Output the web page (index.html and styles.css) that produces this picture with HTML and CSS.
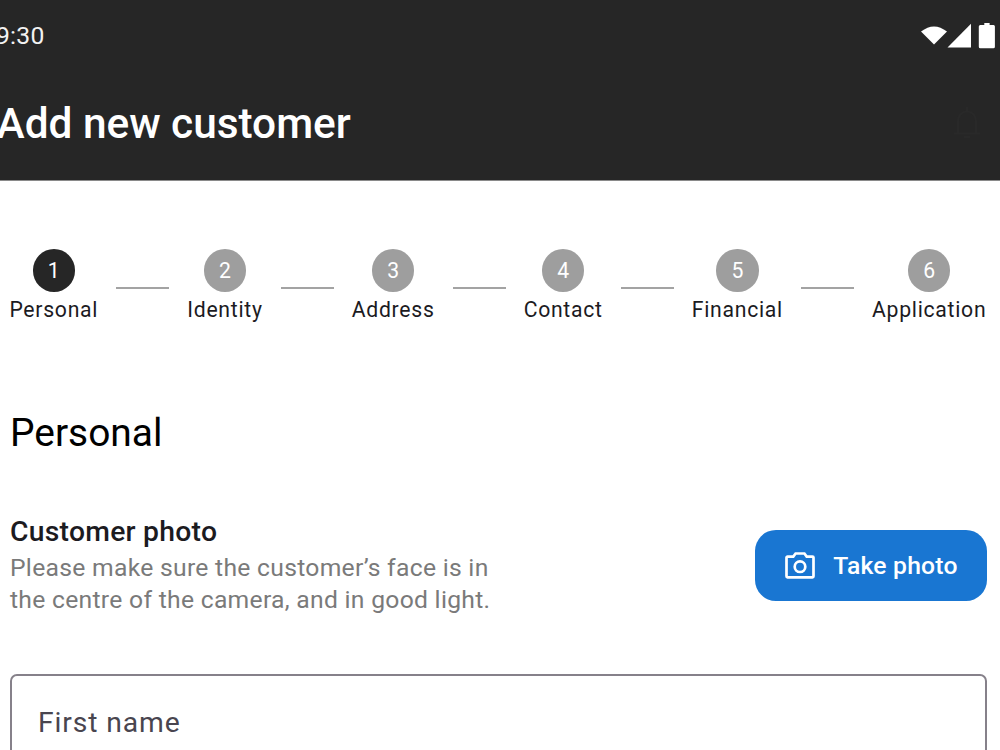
FILE: index.html
```
<!DOCTYPE html>
<html lang="en">
<head>
<meta charset="utf-8">
<title>Add new customer</title>
<link rel="stylesheet" href="styles.css">
</head>

<body>
<header class="appbar">
  <div class="statusbar">
    <span class="time">9:30</span>
    <svg class="status-icons" width="74" height="26" viewBox="0 0 74 26">
      <path d="M0 8.6 Q13 -1.8 26 8.6 L13 21.6z"/>
      <path d="M26.5 24.5 L50 0.8 V24.5z"/>
      <path d="M59.3 2 h4 v-2 h5.3 v2 h4 a1.5 1.5 0 0 1 1.3 1.5 V23.7 a1.5 1.5 0 0 1 -1.5 1.5 H59.3 a1.5 1.5 0 0 1 -1.5 -1.5 V3.5 a1.5 1.5 0 0 1 1.5 -1.5z"/>
    </svg>
  </div>
  <div class="titlebar">
    <h1>Add new customer</h1>
    <svg class="bell" width="28" height="36" viewBox="0 0 28 36">
      <path d="M1 29.5 H27 M5 29 V17 a9 9.5 0 0 1 18 0 V29 M14 7 V3 M11 33 h6"/>
    </svg>
  </div>
</header>

<main>
  <div class="steps">
    <div class="step active"><span class="num">1</span><span class="name">Personal</span></div>
    <div class="line"></div>
    <div class="step"><span class="num">2</span><span class="name">Identity</span></div>
    <div class="line"></div>
    <div class="step"><span class="num">3</span><span class="name">Address</span></div>
    <div class="line"></div>
    <div class="step"><span class="num">4</span><span class="name">Contact</span></div>
    <div class="line"></div>
    <div class="step"><span class="num">5</span><span class="name">Financial</span></div>
    <div class="line"></div>
    <div class="step"><span class="num">6</span><span class="name">Application</span></div>
  </div>

  <h2>Personal</h2>

  <div class="photo">
    <div class="photo-text">
      <h3>Customer photo</h3>
      <p>Please make sure the customer’s face is in<br>the centre of the camera, and in good light.</p>
    </div>
    <button class="take-photo">
      <svg width="30" height="27" viewBox="0 0 30 27">
        <path d="M2.5 4.6 H8.3 L10.6 1.5 H19.4 L21.7 4.6 H27.5 a1 1 0 0 1 1 1 V24.3 a1 1 0 0 1 -1 1 H2.5 a1 1 0 0 1 -1 -1 V5.6 a1 1 0 0 1 1 -1z"/>
        <circle cx="15" cy="14.7" r="5.3"/>
      </svg>
      Take photo
    </button>
  </div>

  <div class="field">First name</div>
</main>
</body>
</html>
```
FILE: styles.css
```
* {
  box-sizing: border-box;
}

body {
  margin: 0;
  height: 750px;
  overflow: hidden;
  background: #fff;
  font-family: Roboto, sans-serif;
  color: #1c1b1f;
}

h1, h2, h3, p {
  margin: 0;
}

.appbar {
  height: 181px;
  background: #262626;
  border-bottom: 1px solid #8a8a8a;
  color: #fff;
}

.statusbar {
  display: flex;
  justify-content: space-between;
  align-items: center;
  height: 71px;
  padding-right: 5px;
}

.time {
  margin-left: -4px;
  font-size: 24.7px;
  letter-spacing: .25px;
  color: #f2f2f2;
}

.status-icons {
  fill: #fff;
  overflow: visible;
}

.titlebar {
  display: flex;
  justify-content: space-between;
  align-items: center;
  height: 105px;
  padding-right: 19px;
}

.titlebar h1 {
  margin-left: -3.4px;
  font-size: 42.4px;
  font-weight: 500;
  letter-spacing: -.03px;
}

.bell {
  margin-bottom: 3px;
  fill: none;
  stroke: #292929;
  stroke-width: 2px;
}

main {
  padding: 68.2px 13px 0 10px;
}

.steps {
  display: flex;
  justify-content: space-between;
  margin: 0 .6px 0 -.6px;
}

.step {
  display: flex;
  flex-direction: column;
  align-items: center;
  gap: 4.4px;
  font-size: 21.2px;
}

.num {
  width: 42.4px;
  height: 42.4px;
  border-radius: 50%;
  background: #9e9e9e;
  color: #fff;
  line-height: 44px;
  text-align: center;
}

.active .num {
  background: #262626;
}

.name {
  line-height: 28.3px;
  letter-spacing: .72px;
}

.line {
  width: 53px;
  height: 2px;
  margin-top: 38px;
  background: #a3a3a3;
}

h2 {
  margin-top: 83.9px;
  font-size: 38.9px;
  line-height: 49.4px;
  font-weight: 400;
  color: #000;
}

.photo {
  display: flex;
  justify-content: space-between;
  align-items: flex-start;
  margin-top: 53px;
}

.photo h3 {
  font-size: 28.3px;
  line-height: 42.4px;
  font-weight: 500;
  letter-spacing: .26px;
}

.photo p {
  margin: -.8px 0 .8px;
  font-size: 24.7px;
  line-height: 31.9px;
  letter-spacing: .28px;
  color: #7a7a7a;
}

.take-photo {
  display: flex;
  align-items: center;
  justify-content: center;
  gap: 18px;
  width: 232px;
  height: 70.7px;
  margin-top: 19.3px;
  padding: 0;
  border: 0;
  border-radius: 21px;
  background: #1976d2;
  color: #fff;
  font: 500 24.7px Roboto, sans-serif;
  letter-spacing: .22px;
}

.take-photo svg {
  margin-left: 1px;
  fill: none;
  stroke: #fff;
  stroke-width: 2.7px;
}

.field {
  height: 99px;
  margin-top: 56.9px;
  padding-left: 26px;
  border: 2px solid #86818a;
  border-radius: 7px;
  font-size: 28.3px;
  line-height: 94px;
  letter-spacing: .88px;
  color: #49454f;
}
```
